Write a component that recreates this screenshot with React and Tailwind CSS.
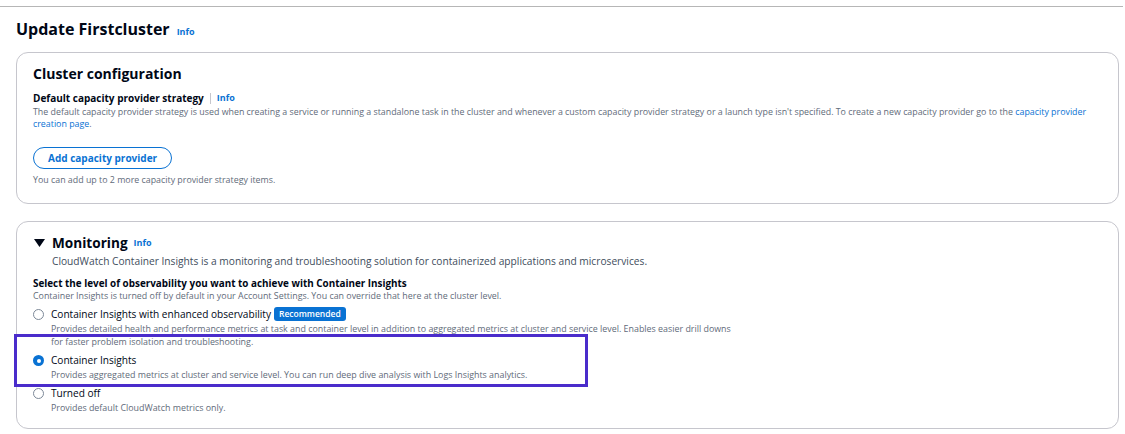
import React from "react";

const font = { fontFamily: '"Open Sans", "Noto Sans", sans-serif' };

const Info = ({ className = "" }) => (
  <span className={`text-[9px] font-bold text-[#0972d3] ${className}`}>Info</span>
);

const Radio = ({ checked, label, badge, desc }) => (
  <div className="flex items-start">
    <div className="w-[18px] pt-[3px] flex-none">
      {checked ? (
        <div className="w-[11px] h-[11px] rounded-full bg-[#0972d3] flex items-center justify-center">
          <div className="w-[4px] h-[4px] rounded-full bg-white" />
        </div>
      ) : (
        <div className="w-[11px] h-[11px] rounded-full border border-[#7d8998] bg-white" />
      )}
    </div>
    <div>
      <div className="flex items-center gap-[3px] text-[10.1px] leading-[16px] text-[#000716]">
        {label}
        {badge && (
          <span className="rounded-[3px] bg-[#0972d3] text-white text-[8.5px] font-semibold px-[5px] leading-[14px]">
            {badge}
          </span>
        )}
      </div>
      <div className="text-[8.9px] leading-[13px] text-[#5f6b7a] max-w-[690px]">{desc}</div>
    </div>
  </div>
);

export default function App() {
  return (
    <div className="bg-white w-[1125px] h-[434px] overflow-hidden" style={font}>
      <div className="h-[7px] border-b border-[#b6b6b6] mr-[2px]" />
      <div className="px-[16px] pr-[6px]">
        <div className="flex items-baseline gap-[7px] mt-[11px]">
          <h1 className="text-[16px] font-bold text-[#000716] leading-[22px]">Update Firstcluster</h1>
          <Info />
        </div>

        <div className="mt-[12px] border border-[#c6c6cd] rounded-[12px] px-[16px] pt-[11px] h-[152px]">
          <h2 className="text-[14px] font-bold text-[#000716] leading-[20px]">Cluster configuration</h2>
          <div className="flex items-center mt-[7px] text-[10px] font-bold text-[#000716] leading-[14px]">
            Default capacity provider strategy
            <span className="mx-[6px] w-px h-[11px] bg-[#c6c6cd]" />
            <Info />
          </div>
          <p className="text-[8.85px] leading-[12px] text-[#5f6b7a] mt-[1px]">
            The default capacity provider strategy is used when creating a service or running a standalone task in the cluster and whenever a custom capacity provider strategy or a launch type isn't specified. To create a new capacity provider go to the{" "}
            <span className="text-[#0972d3]">capacity provider creation page</span>.
          </p>
          <button className="mt-[17px] h-[22px] px-[14px] rounded-full border border-[#0972d3] text-[#0972d3] text-[10px] font-bold leading-none">
            Add capacity provider
          </button>
          <p className="text-[8.85px] leading-[12px] text-[#5f6b7a] mt-[5px]">
            You can add up to 2 more capacity provider strategy items.
          </p>
        </div>

        <div className="relative mt-[17px] border border-[#c6c6cd] rounded-[12px] px-[16px] pt-[11px] h-[208px]">
          <div className="flex items-center">
            <svg width="11" height="9" viewBox="0 0 11 9" className="ml-[1px]">
              <path d="M0 0 L11 0 L5.5 8 Z" fill="#000716" />
            </svg>
            <h2 className="ml-[7px] text-[13.6px] font-bold text-[#000716] leading-[20px]">Monitoring</h2>
            <Info className="ml-[6px]" />
          </div>
          <p className="ml-[19px] text-[10.2px] leading-[16px] text-[#414d5c]">
            CloudWatch Container Insights is a monitoring and troubleshooting solution for containerized applications and microservices.
          </p>
          <div className="mt-[7px] text-[9.9px] font-bold text-[#000716] leading-[14px]">
            Select the level of observability you want to achieve with Container Insights
          </div>
          <div className="text-[8.9px] leading-[12px] text-[#5f6b7a]">
            Container Insights is turned off by default in your Account Settings. You can override that here at the cluster level.
          </div>
          <div className="mt-[4px] flex flex-col gap-[4px]">
            <Radio
              label="Container Insights with enhanced observability"
              badge="Recommended"
              desc="Provides detailed health and performance metrics at task and container level in addition to aggregated metrics at cluster and service level. Enables easier drill downs for faster problem isolation and troubleshooting."
            />
            <Radio
              checked
              label="Container Insights"
              desc="Provides aggregated metrics at cluster and service level. You can run deep dive analysis with Logs Insights analytics."
            />
            <Radio label="Turned off" desc="Provides default CloudWatch metrics only." />
          </div>
          <div className="absolute left-[-3px] top-[112px] w-[574px] h-[53px] border-[3px] border-[#4a2ccb]" />
        </div>
      </div>
    </div>
  );
}
